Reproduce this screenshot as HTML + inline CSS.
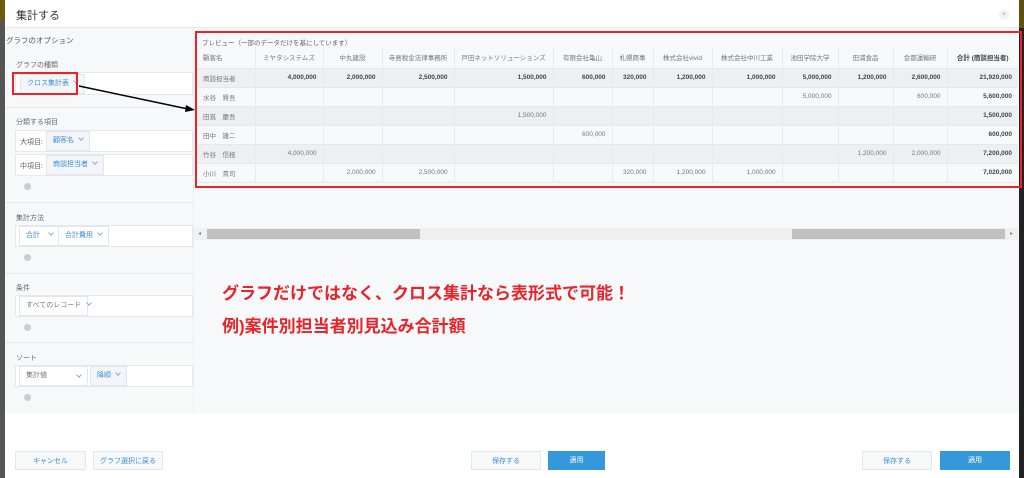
<!DOCTYPE html>
<html><head><meta charset="utf-8"><style>
*{box-sizing:border-box;margin:0;padding:0}
body{width:1024px;height:478px;overflow:hidden;background:#555;font-family:"Liberation Sans","Noto Sans CJK JP",sans-serif;position:relative;color:#333}
.a{position:absolute}
.modal{left:5px;top:0;width:1014px;height:478px;background:#fff}
.t{font-size:7px;color:#666;white-space:nowrap}
.box{background:#fff;border:1px solid #e6e8ec}
.dd{background:#f3f5f8;border:1px solid #e3e6ea;font-size:7px;color:#3b8fd6;padding:0 6px;height:20px;line-height:18px;white-space:nowrap}
.v{display:inline-block;width:4px;height:4px;border-right:1px solid #7fb2e0;border-bottom:1px solid #7fb2e0;transform:rotate(45deg);margin-left:5px;vertical-align:2px}
.circ{width:7px;height:7px;border-radius:50%;background:#ccc}
.sep{height:1px;background:#e5e7ea;left:5px;width:188px}
table{border-collapse:collapse;font-size:6.5px;color:#777}
td{border-left:1px solid #e8e9ec;height:19px;padding:0 6px;text-align:right;white-space:nowrap}
td:first-child{border-left:none;text-align:left}
tr.h td{text-align:center;height:21px}
tr.h td:first-child{text-align:left}
tr.g td{background:#eeeff2}
tr.b td{font-weight:bold;color:#444}
td.bt{font-weight:bold;color:#444}
tr{border-bottom:1px solid #e6e7ea}
.btn{font-size:7px;text-align:center;line-height:19px;height:19px}
.w{background:#f7f8fa;border:1px solid #e3e6ea;color:#3b8fd6}
.p{background:#3498db;color:#fff}
</style></head><body>
<div class="a" style="left:0;top:0;width:5px;height:20px;background:#6b5a10"></div>
<div class="a" style="left:1019px;top:0;width:5px;height:28px;background:#5e5010"></div>
<div class="a" style="left:1019px;top:28px;width:5px;height:450px;background:#222"></div>
<div class="a modal">
 <div class="a" style="left:11px;top:7px;font-size:11px;color:#333">集計する</div>
 <div class="a" style="left:994px;top:10px;width:10px;height:10px;border-radius:50%;background:#f1f2f4;font-size:6px;color:#999;text-align:center;line-height:10px">×</div>
 <div class="a" style="left:0;top:27px;width:1014px;height:1px;background:#e8e8e8"></div>
 <div class="a" style="left:0;top:28px;width:1014px;height:385px;background:#f7f8fa"></div>
 <div class="a" style="left:188px;top:28px;width:1px;height:385px;background:#eceef1"></div>
</div>
<div class="a t" style="left:6px;top:35px;font-size:7.5px;color:#555">グラフのオプション</div>
<div class="a t" style="left:16px;top:60px">グラフの種類</div>
<div class="a box" style="left:15px;top:72px;width:178px;height:23px"></div>
<div class="a dd" style="left:20px;top:74px">クロス集計表<span class="v"></span></div>
<div class="a" style="left:12px;top:72px;width:66px;height:23px;border:2px solid #e8242b"></div>
<div class="a sep" style="top:107px"></div>
<div class="a t" style="left:16px;top:117px">分類する項目</div>
<div class="a box" style="left:15px;top:130px;width:178px;height:22px"></div>
<div class="a t" style="left:20px;top:137px">大項目:</div>
<div class="a dd" style="left:46px;top:131px">顧客名<span class="v"></span></div>
<div class="a box" style="left:15px;top:154px;width:178px;height:22px"></div>
<div class="a t" style="left:20px;top:161px">中項目:</div>
<div class="a dd" style="left:46px;top:155px">商談担当者<span class="v"></span></div>
<div class="a circ" style="left:24px;top:183px"></div>
<div class="a sep" style="top:202px"></div>
<div class="a t" style="left:16px;top:213px">集計方法</div>
<div class="a box" style="left:15px;top:225px;width:178px;height:22px"></div>
<div class="a dd" style="left:19px;top:226px;background:#fff">合計<span class="v" style="margin-left:9px"></span></div>
<div class="a dd" style="left:58px;top:226px;background:#fff">合計費用<span class="v"></span></div>
<div class="a circ" style="left:24px;top:254px"></div>
<div class="a sep" style="top:273px"></div>
<div class="a t" style="left:16px;top:283px">条件</div>
<div class="a box" style="left:15px;top:295px;width:178px;height:22px"></div>
<div class="a dd" style="left:19px;top:296px;background:#fff;color:#777;width:69px">すべてのレコード<span class="v" style="margin-left:6px"></span></div>
<div class="a circ" style="left:24px;top:324px"></div>
<div class="a sep" style="top:342px"></div>
<div class="a t" style="left:16px;top:353px">ソート</div>
<div class="a box" style="left:15px;top:365px;width:178px;height:22px"></div>
<div class="a dd" style="left:19px;top:366px;background:#fff;color:#777;width:69px">集計値<span class="v" style="position:absolute;right:6px;top:6px"></span></div>
<div class="a dd" style="left:90px;top:366px">降順<span class="v"></span></div>
<div class="a circ" style="left:24px;top:394px"></div>

<div class="a t" style="left:202px;top:37px;font-size:6.5px">プレビュー（一部のデータだけを基にしています）</div>
<div class="a" style="left:197px;top:47px">
<table style="width:821px">
<colgroup><col style="width:58px"><col style="width:68px"><col style="width:59px"><col style="width:72px"><col style="width:99px"><col style="width:59px"><col style="width:41px"><col style="width:59px"><col style="width:70px"><col style="width:56px"><col style="width:55px"><col style="width:54px"><col style="width:71px"></colgroup>
<tr class="h"><td>顧客名</td><td>ミヤタシステムズ</td><td>中丸建設</td><td>寺島税金法律事務所</td><td>戸田ネットソリューションズ</td><td>有限会社亀山</td><td>札幌商事</td><td>株式会社vivid</td><td>株式会社中川工業</td><td>池田学院大学</td><td>田浦食品</td><td>金都運輸研</td><td style="font-weight:bold;color:#444">合計 (商談担当者)</td></tr>
<tr class="g b"><td style="font-weight:normal;color:#777">商談担当者</td><td>4,000,000</td><td>2,000,000</td><td>2,500,000</td><td>1,500,000</td><td>600,000</td><td>320,000</td><td>1,200,000</td><td>1,000,000</td><td>5,000,000</td><td>1,200,000</td><td>2,600,000</td><td>21,920,000</td></tr>
<tr><td>水谷　賢吾</td><td></td><td></td><td></td><td></td><td></td><td></td><td></td><td></td><td>5,000,000</td><td></td><td>600,000</td><td class="bt">5,600,000</td></tr>
<tr class="g"><td>田嶌　慶吾</td><td></td><td></td><td></td><td>1,500,000</td><td></td><td></td><td></td><td></td><td></td><td></td><td></td><td class="bt">1,500,000</td></tr>
<tr><td>田中　雄二</td><td></td><td></td><td></td><td></td><td>600,000</td><td></td><td></td><td></td><td></td><td></td><td></td><td class="bt">600,000</td></tr>
<tr class="g"><td>竹谷　信枝</td><td>4,000,000</td><td></td><td></td><td></td><td></td><td></td><td></td><td></td><td></td><td>1,200,000</td><td>2,000,000</td><td class="bt">7,200,000</td></tr>
<tr><td>小川　貴司</td><td></td><td>2,000,000</td><td>2,500,000</td><td></td><td></td><td>320,000</td><td>1,200,000</td><td>1,000,000</td><td></td><td></td><td></td><td class="bt">7,020,000</td></tr>
</table></div>
<div class="a" style="left:195px;top:31px;width:827px;height:157px;border:2px solid #e8242b"></div>

<div class="a" style="left:194px;top:228px;width:824px;height:12px;background:#f0f0f0"></div>
<div class="a" style="left:207px;top:229px;width:213px;height:10px;background:#c1c1c1"></div>
<div class="a" style="left:792px;top:229px;width:213px;height:10px;background:#c1c1c1"></div>
<div class="a" style="left:198px;top:230px;font-size:6px;color:#888">◂</div>
<div class="a" style="left:1010px;top:230px;font-size:6px;color:#888">▸</div>

<div class="a" style="left:222px;top:279px;font-size:17px;font-weight:bold;color:#e8242b">グラフだけではなく、クロス集計なら表形式で可能！</div>
<div class="a" style="left:222px;top:312px;font-size:17px;font-weight:bold;color:#e8242b">例)案件別担当者別見込み合計額</div>

<svg class="a" style="left:0;top:0" width="1024" height="478"><line x1="79" y1="86" x2="188" y2="109" stroke="#000" stroke-width="1.5"/><polygon points="195,110 186,105 185,112" fill="#000"/></svg>

<div class="a btn w" style="left:15px;top:451px;width:71px">キャンセル</div>
<div class="a btn w" style="left:93px;top:451px;width:70px">グラフ選択に戻る</div>
<div class="a btn w" style="left:471px;top:451px;width:70px">保存する</div>
<div class="a btn p" style="left:548px;top:451px;width:57px">適用</div>
<div class="a btn w" style="left:862px;top:451px;width:70px">保存する</div>
<div class="a btn p" style="left:940px;top:451px;width:70px">適用</div>
</body></html>
